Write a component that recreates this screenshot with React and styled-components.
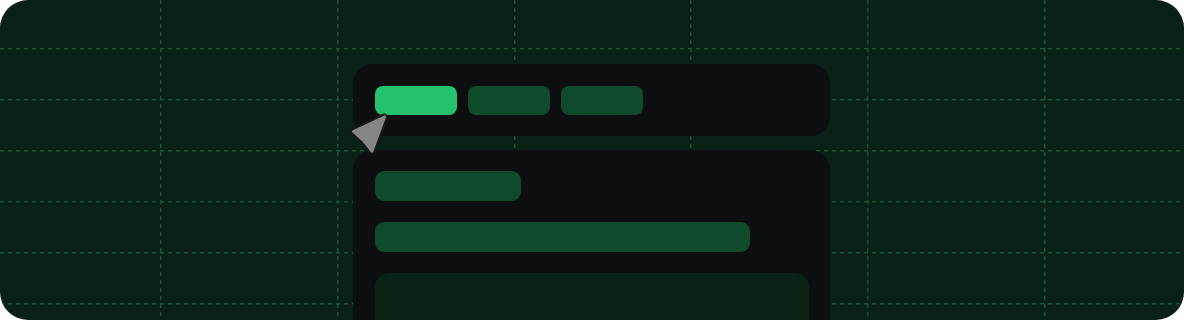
import React from 'react';
import styled, { createGlobalStyle } from 'styled-components';

const GlobalStyle = createGlobalStyle`
  html, body {
    margin: 0;
    padding: 0;
    background: #ffffff;
    font-family: "Inter", "Liberation Sans", sans-serif;
  }
`;

const Stage = styled.div`
  position: relative;
  width: 1184px;
  height: 320px;
  border-radius: 28px;
  overflow: hidden;
  background: #082015;
  display: flex;
  flex-direction: column;
  align-items: center;
  padding-top: 64px;
  padding-right: 1px;
  box-sizing: border-box;
  gap: 14px;
`;

const Grid = styled.svg`
  position: absolute;
  inset: 0;
  pointer-events: none;
`;

const Card = styled.div`
  position: relative;
  z-index: ${p => p.$z || 1};
  width: 477px;
  box-sizing: border-box;
  background: #0c0e10;
  border-radius: 20px;
  padding: ${p => p.$pad};
  display: flex;
  flex-direction: ${p => (p.$column ? 'column' : 'row')};
  gap: ${p => p.$gap}px;
  flex-shrink: 0;
`;

const Tab = styled.div`
  width: 82px;
  height: 29px;
  border-radius: 8px;
  background: ${p => (p.$active ? '#25c06b' : '#0f4a2c')};
`;

const Bar = styled.div`
  width: ${p => p.$w}px;
  height: 30px;
  border-radius: 9px;
  background: #0f4a2c;
`;

const Panel = styled.div`
  width: 434px;
  height: 110px;
  border-radius: 14px;
  background: #0a2116;
`;

const Pointer = styled.svg`
  position: absolute;
  left: -7px;
  top: 46px;
  width: 48px;
  height: 50px;
  z-index: 3;
  overflow: visible;
`;

const xs = [160, 337, 514, 690, 867, 1044];
const ys = [48, 99, 150, 201, 252, 303];
const arrow = '38.5 7 7.5 21.5 18 31 26 41';

export default function App() {
  return (
    <>
      <GlobalStyle />
      <Stage>
        <Grid width="1184" height="320">
          {xs.map(x => (
            <line key={'v' + x} x1={x + 0.75} y1="0" x2={x + 0.75} y2="320"
              stroke="#145632" strokeWidth="1.5" strokeDasharray="4 4" />
          ))}
          {ys.map(y => (
            <line key={'h' + y} x1="0" y1={y + 0.75} x2="1184" y2={y + 0.75}
              stroke="#145632" strokeWidth="1.5" strokeDasharray="4 4" />
          ))}
        </Grid>

        <Card $pad="22px 22px 21px" $gap={11} $z={2}>
          <Tab $active />
          <Tab />
          <Tab />
          <Pointer viewBox="0 0 48 50">
            <polygon points={arrow} fill="#17181a" stroke="#17181a"
              strokeWidth="7" strokeLinejoin="round" />
            <polygon points={arrow} fill="#868686" stroke="#868686"
              strokeWidth="3" strokeLinejoin="round" />
          </Pointer>
        </Card>

        <Card $pad="21px 21px 0 22px" $gap={21} $column>
          <Bar $w={146} />
          <Bar $w={375} />
          <Panel />
        </Card>
      </Stage>
    </>
  );
}
